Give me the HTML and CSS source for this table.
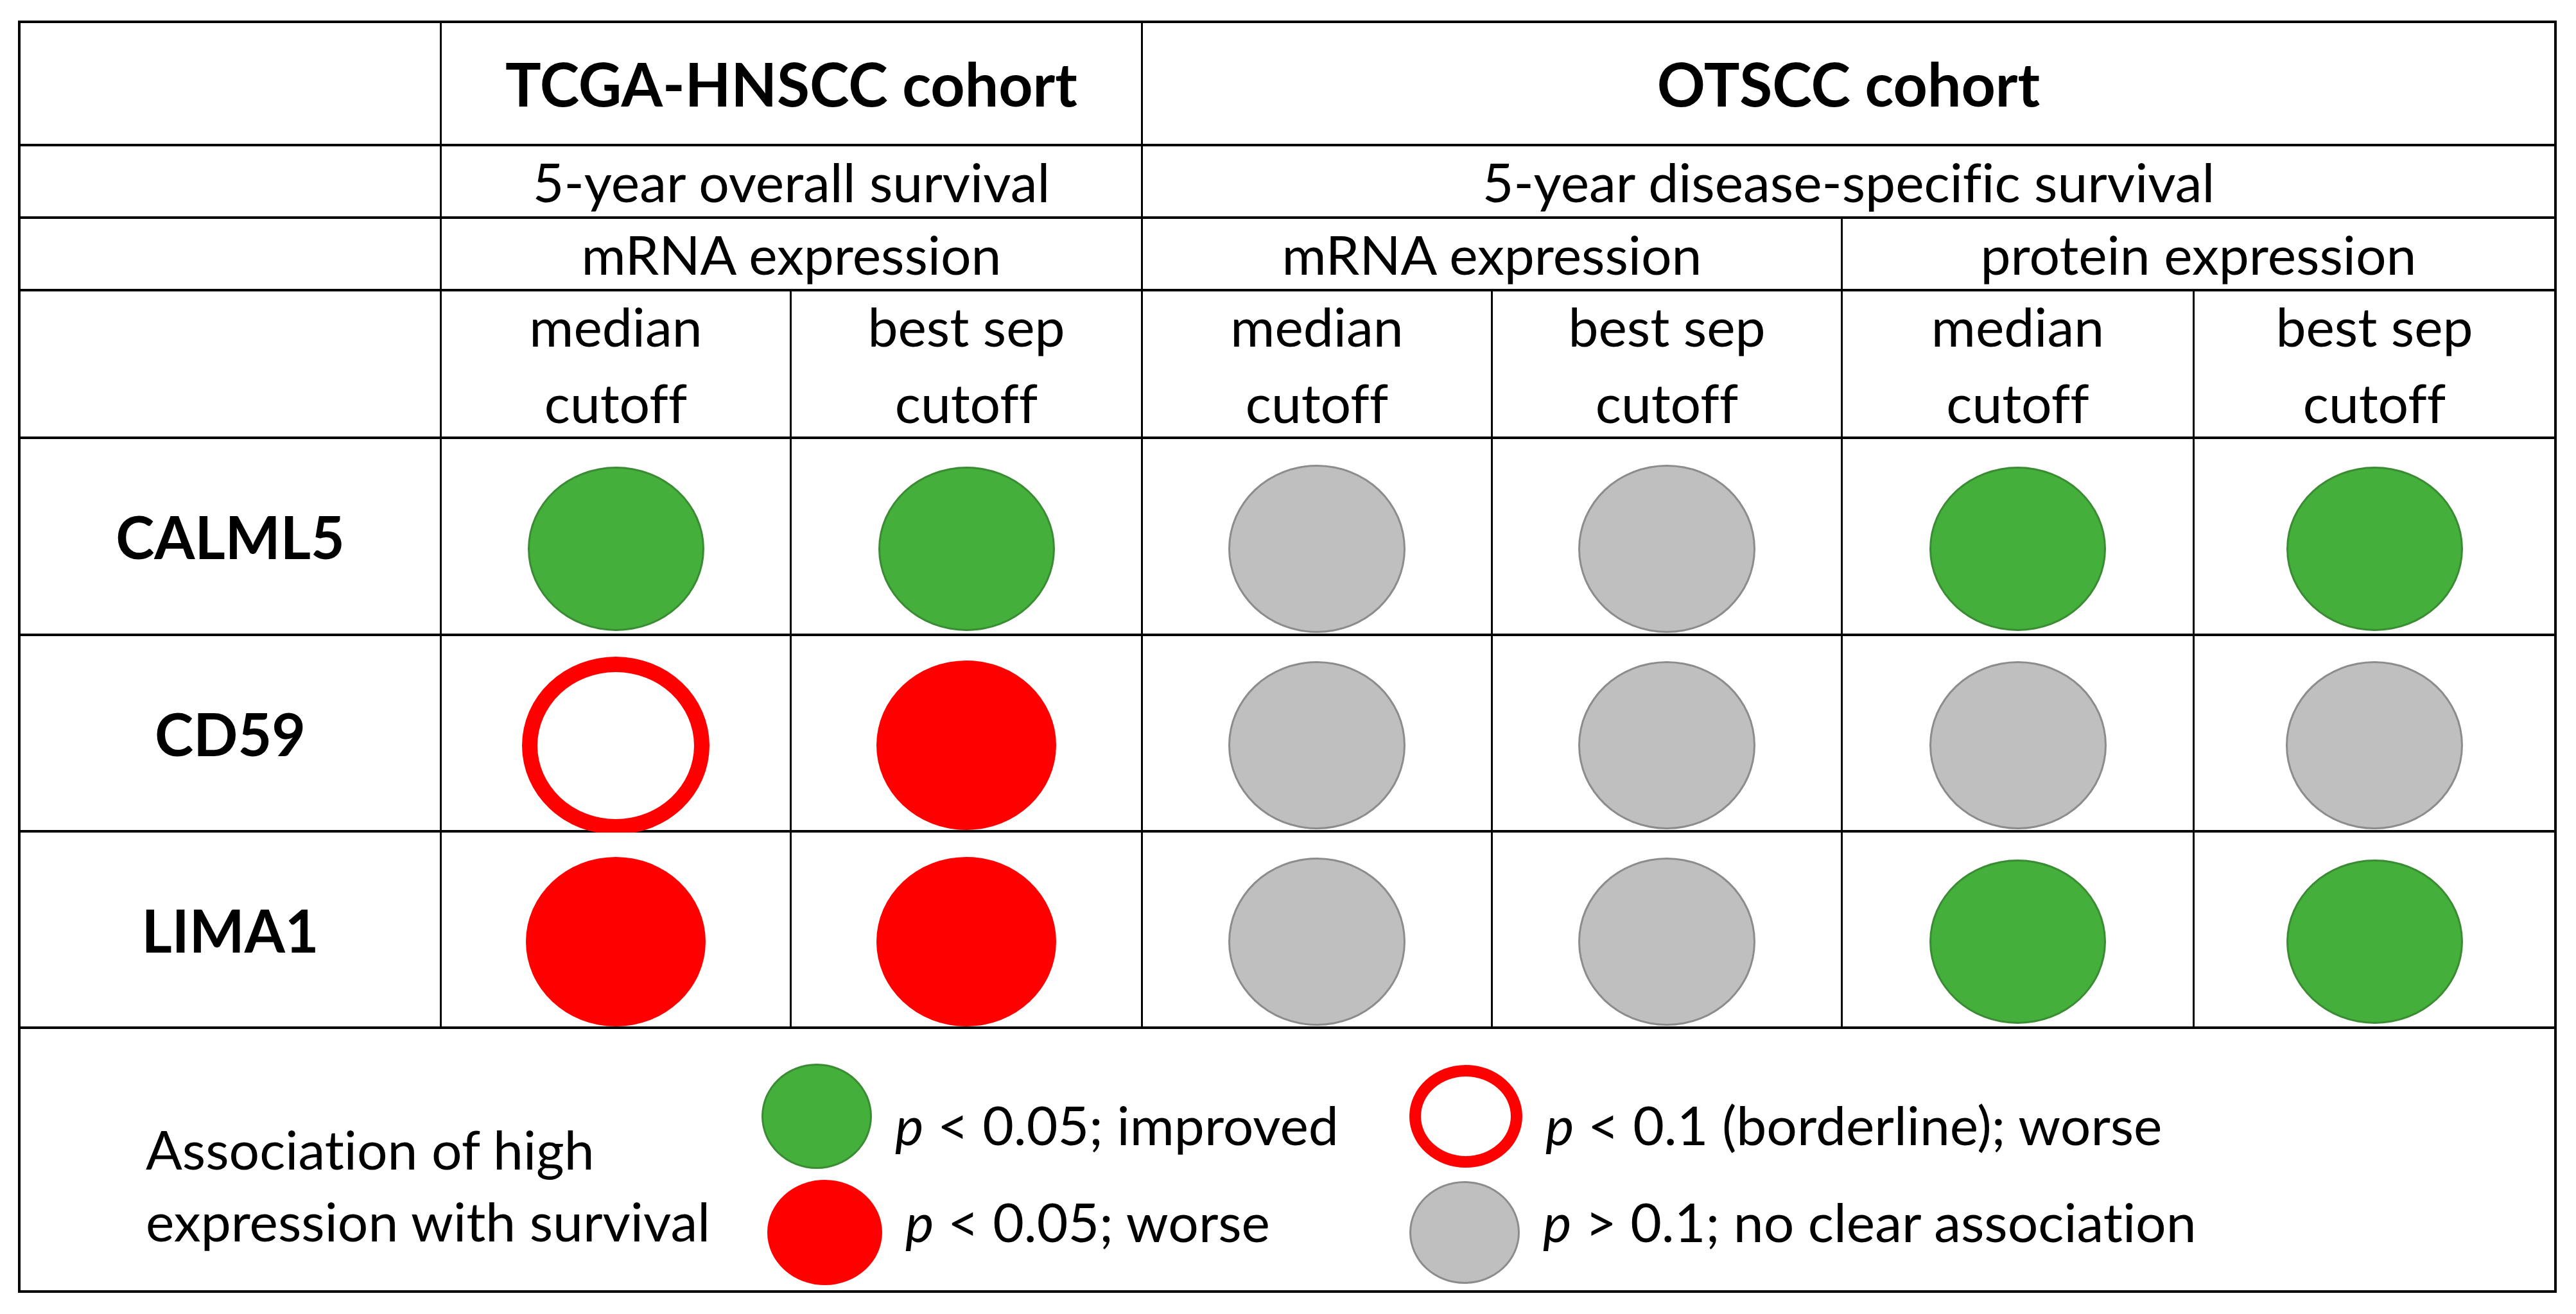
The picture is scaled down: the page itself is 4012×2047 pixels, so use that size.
FILE: index.html
```html
<!DOCTYPE html>
<html lang="en">
<head>
<meta charset="utf-8">
<title>Survival association table</title>
<link rel="stylesheet" href="styles.css">
</head>
<body>
<div class="fig">
  <div class="c"></div>
  <div class="c title span2">TCGA-HNSCC cohort</div>
  <div class="c title span4">OTSCC cohort</div>

  <div class="c"></div>
  <div class="c span2">5-year overall survival</div>
  <div class="c span4">5-year disease-specific survival</div>

  <div class="c"></div>
  <div class="c span2">mRNA expression</div>
  <div class="c span2">mRNA expression</div>
  <div class="c span2">protein expression</div>

  <div class="c"></div>
  <div class="c two">median<br>cutoff</div>
  <div class="c two">best sep<br>cutoff</div>
  <div class="c two">median<br>cutoff</div>
  <div class="c two">best sep<br>cutoff</div>
  <div class="c two">median<br>cutoff</div>
  <div class="c two">best sep<br>cutoff</div>

  <div class="c gene">CALML5</div>
  <div class="c cell"><span class="dot green"></span></div>
  <div class="c cell"><span class="dot green"></span></div>
  <div class="c cell"><span class="dot gray"></span></div>
  <div class="c cell"><span class="dot gray"></span></div>
  <div class="c cell"><span class="dot green"></span></div>
  <div class="c cell"><span class="dot green"></span></div>

  <div class="c gene">CD59</div>
  <div class="c cell"><span class="dot ring"></span></div>
  <div class="c cell"><span class="dot red"></span></div>
  <div class="c cell"><span class="dot gray"></span></div>
  <div class="c cell"><span class="dot gray"></span></div>
  <div class="c cell"><span class="dot gray"></span></div>
  <div class="c cell"><span class="dot gray"></span></div>

  <div class="c gene">LIMA1</div>
  <div class="c cell"><span class="dot red"></span></div>
  <div class="c cell"><span class="dot red"></span></div>
  <div class="c cell"><span class="dot gray"></span></div>
  <div class="c cell"><span class="dot gray"></span></div>
  <div class="c cell"><span class="dot green"></span></div>
  <div class="c cell"><span class="dot green"></span></div>

  <div class="c legend">
    <div class="lg-label">Association of high<br>expression with survival</div>
    <div class="lg-items">
      <div class="lg-item">
        <span class="lg-dot lg-green"></span>
        <span class="lg-text r1"><i>p</i> &lt; 0.05; improved</span>
      </div>
      <div class="lg-item">
        <span class="lg-dot lg-ring"></span>
        <span class="lg-text r1"><i>p</i> &lt; 0.1 (borderline); worse</span>
      </div>
      <div class="lg-item">
        <span class="lg-dot lg-red"></span>
        <span class="lg-text r2"><i>p</i> &lt; 0.05; worse</span>
      </div>
      <div class="lg-item">
        <span class="lg-dot lg-gray"></span>
        <span class="lg-text r2"><i>p</i> &gt; 0.1; no clear association</span>
      </div>
    </div>
  </div>
</div>
</body>
</html>
```

FILE: styles.css
```css
html, body {
  margin: 0;
  padding: 0;
  background: #ffffff;
}

.fig {
  display: grid;
  grid-template-columns: 653px 542px 544px 542px 542px 545px 560px;
  grid-template-rows: 188px 109px 109px 226px 303px 302px 302px 407px;
  gap: 4px 3px;
  background: #000000;
  border: 4px solid #000000;
  width: max-content;
  margin: 32px 0 0 28px;
  font-family: Lato, "Open Sans", sans-serif;
  font-variant-ligatures: none;
  color: #000000;
}

.c {
  background: #ffffff;
  display: flex;
  align-items: center;
  justify-content: center;
  text-align: center;
  font-size: 84px;
  white-space: nowrap;
  min-width: 0;
}

.span2 { grid-column: span 2; }
.span4 { grid-column: span 4; }

.title {
  font-weight: 700;
  font-size: 93px;
}

.two {
  line-height: 119px;
}

.gene {
  font-weight: 700;
  font-size: 91px;
}

.cell {
  box-sizing: border-box;
  padding-top: 38px;
}

.dot {
  display: block;
  flex: none;
  border-radius: 50%;
  box-sizing: border-box;
}

.green {
  width: 275px;
  height: 256px;
  background: #45af3c;
  border: 3px solid #3a8c33;
}

.gray {
  width: 276px;
  height: 262px;
  background: #bfbfbf;
  border: 3px solid #8c8c8c;
}

.red {
  width: 280px;
  height: 264px;
  background: #ff0000;
}

.ring {
  width: 292px;
  height: 277px;
  border: 24px solid #ff0000;
  background: transparent;
}

/* legend */
.legend {
  grid-column: 1 / -1;
  justify-content: flex-start;
  align-items: flex-start;
  text-align: left;
  padding-left: 195px;
}

.lg-label {
  width: 959px;
  flex: none;
  margin-top: 131px;
  line-height: 112px;
}

.lg-items {
  display: grid;
  grid-template-columns: 1009px auto;
  grid-template-rows: 164px 164px;
  row-gap: 17px;
  margin-top: 54px;
}

.lg-item {
  display: flex;
  align-items: center;
}

.lg-dot {
  display: block;
  flex: none;
  border-radius: 50%;
  box-sizing: border-box;
}

.lg-green {
  width: 172px;
  height: 164px;
  background: #45af3c;
  border: 3px solid #3a8c33;
}

.lg-red {
  width: 179px;
  height: 164px;
  background: #ff0000;
  margin-left: 9px;
}

.lg-ring {
  width: 176px;
  height: 160px;
  border: 18px solid #ff0000;
}

.lg-gray {
  width: 172px;
  height: 160px;
  background: #bfbfbf;
  border: 3px solid #8c8c8c;
}

.lg-text {
  line-height: 100px;
  margin-left: 36px;
}

.lg-text.r1 {
  margin-top: 25px;
}

.lg-text.r2 {
  margin-bottom: 35px;
}
```
